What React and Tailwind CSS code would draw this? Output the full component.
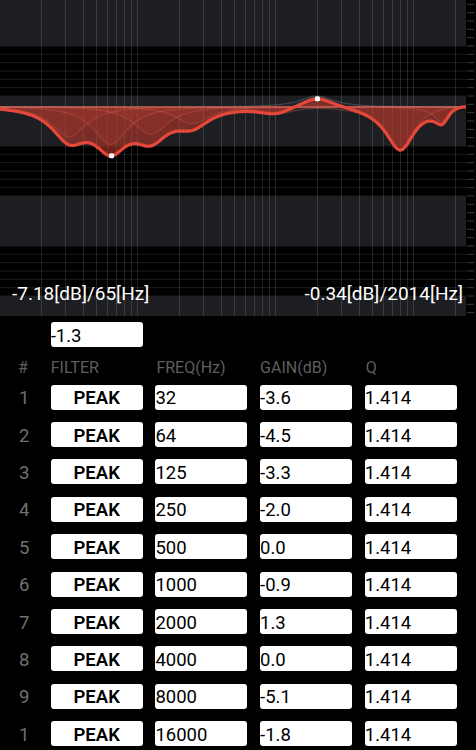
import React, { useMemo } from "react";

const FS = 48000;
const PX_PER_DB = 50 / 6;
const ZERO_Y = 96;
const PREAMP = -1.3;
const GRAPH_W = 466;

const bands = [
  { f: 32, g: -3.6 },
  { f: 64, g: -4.5 },
  { f: 125, g: -3.3 },
  { f: 250, g: -2.0 },
  { f: 500, g: 0.0 },
  { f: 1000, g: -0.9 },
  { f: 2000, g: 1.3 },
  { f: 4000, g: 0.0 },
  { f: 8000, g: -5.1 },
  { f: 16000, g: -1.8 },
];

const gridFreqs = [
  20, 30, 40, 50, 60, 70, 80, 90, 100,
  200, 300, 400, 500, 600, 700, 800, 900, 1000,
  2000, 3000, 4000, 5000, 6000, 7000, 8000, 9000, 10000,
  20000,
];

const xToFreq = (x) => 20 * Math.pow(10, (x - 41) / 138);
const freqToX = (f) => 41 + 138 * Math.log10(f / 20);
const dbToY = (db) => ZERO_Y - db * PX_PER_DB;

// rbj peaking filter magnitude in dB
function peakDb(f0, gain, q, f) {
  const A = Math.pow(10, gain / 40);
  const w0 = (2 * Math.PI * f0) / FS;
  const alpha = Math.sin(w0) / (2 * q);
  const cw = Math.cos(w0);
  const b0 = 1 + alpha * A, b1 = -2 * cw, b2 = 1 - alpha * A;
  const a0 = 1 + alpha / A, a1 = -2 * cw, a2 = 1 - alpha / A;
  const w = (2 * Math.PI * f) / FS;
  const c1 = Math.cos(w), s1 = Math.sin(w), c2 = Math.cos(2 * w), s2 = Math.sin(2 * w);
  const nr = b0 + b1 * c1 + b2 * c2, ni = -(b1 * s1 + b2 * s2);
  const dr = a0 + a1 * c1 + a2 * c2, di = -(a1 * s1 + a2 * s2);
  return 10 * Math.log10((nr * nr + ni * ni) / (dr * dr + di * di));
}

const totalDb = (f) => PREAMP + bands.reduce((s, b) => s + peakDb(b.f, b.g, 1.414, f), 0);

const EqGraph = () => {
  const { curve, fill, singles } = useMemo(() => {
    const xs = [];
    for (let x = 0; x <= GRAPH_W; x += 1) xs.push(x);
    const pts = xs.map((x) => [x, dbToY(totalDb(xToFreq(x)))]);
    const base = dbToY(PREAMP);
    const line = pts.map(([x, y], i) => `${i ? "L" : "M"}${x},${y.toFixed(2)}`).join(" ");
    const area = `${line} L${GRAPH_W},${base} L0,${base} Z`;
    const one = bands
      .filter((b) => b.g !== 0)
      .map((b) => {
        const p = xs.map((x) => [x, base - peakDb(b.f, b.g, 1.414, xToFreq(x)) * PX_PER_DB]);
        const d = p.map(([x, y], i) => `${i ? "L" : "M"}${x},${y.toFixed(2)}`).join(" ");
        return { d, area: `${d} L${GRAPH_W},${base} L0,${base} Z`, up: b.g > 0 };
      });
    return { curve: line, fill: area, singles: one };
  }, []);

  const markers = [65, 2014].map((f) => [freqToX(f), dbToY(totalDb(f))]);
  const minor = [];
  for (let i = 0; i <= 38; i++) minor.push(i * PX_PER_DB - 4);

  return (
    <svg width="476" height="316" viewBox="0 0 476 316" className="absolute inset-0">
      <rect x="0" y="0" width="476" height="316" fill="#000" />
      {minor.map((y, i) => (
        <line key={i} x1="0" x2={GRAPH_W} y1={y} y2={y} stroke="#1b1b1d" strokeWidth="1" />
      ))}
      {[0, 96, 196, 296].map((y, i) => (
        <rect key={i} x="0" y={y} width={GRAPH_W} height={i === 0 ? 46 : 50} fill="#1c1e22" />
      ))}
      {minor.map((y, i) => (
        <line key={i} x1="467" x2="474" y1={y} y2={y} stroke="#3a3b3e" strokeWidth="1" />
      ))}
      {gridFreqs.map((f) => {
        const x = Math.round(freqToX(f)) + 0.5;
        return <line key={f} x1={x} x2={x} y1="0" y2="316" stroke="#ffffff" strokeOpacity="0.13" strokeWidth="1" />;
      })}
      {singles.map((s, i) => (
        <path key={`a${i}`} d={s.area} fill={s.up ? "#888" : "#d8503f"} fillOpacity={s.up ? 0.05 : 0.12} />
      ))}
      <path d={fill} fill="#c0392b" fillOpacity="0.58" />
      {singles.map((s, i) => (
        <path key={`s${i}`} d={s.d} fill="none" stroke={s.up ? "#9a9a9a" : "#f07060"} strokeOpacity={s.up ? 0.3 : 0.25} strokeWidth="1.2" />
      ))}
      <path d={curve} fill="none" stroke="#e5483a" strokeWidth="3.2" strokeLinejoin="round" />
      {markers.map(([x, y], i) => (
        <rect key={i} x={x - 2.5} y={y - 2.5} width="5" height="5" rx="1.5" fill="#fff" />
      ))}
    </svg>
  );
};

const rows = bands.map((b, i) => ({
  n: i < 9 ? String(i + 1) : "1",
  freq: String(b.f),
  gain: b.g.toFixed(1),
  q: "1.414",
}));

const Box = ({ children, center }) => (
  <div
    className={`w-[92px] h-[25px] shrink-0 rounded-[3px] bg-white text-black text-[18.5px] leading-none pt-[4.6px] whitespace-nowrap overflow-hidden ${
      center ? "text-center font-semibold" : "text-left"
    }`}
  >
    {children}
  </div>
);

export default function App() {
  return (
    <div className="w-[476px] h-[750px] overflow-hidden bg-black font-['Roboto',sans-serif]">
      <div className="relative w-[476px] h-[316px] flex flex-col justify-end">
        <EqGraph />
        <div className="relative flex justify-between pl-3 pr-[13px] pb-[13px] text-white text-[19px] leading-none">
          <span>-7.18[dB]/65[Hz]</span>
          <span>-0.34[dB]/2014[Hz]</span>
        </div>
      </div>

      <div className="pl-[50.7px] mt-[6px]">
        <Box>-1.3</Box>
      </div>

      <div className="flex items-start mt-[12.5px] h-[16px] text-[16px] leading-none text-[#5e5e5e]">
        <div className="w-[50.7px] pl-[18px]">#</div>
        <div className="flex gap-[12.7px]">
          <div className="w-[92px]">FILTER</div>
          <div className="w-[92px] pl-px">FREQ(Hz)</div>
          <div className="w-[92px]">GAIN(dB)</div>
          <div className="w-[92px] pl-px">Q</div>
        </div>
      </div>

      <div className="flex flex-col gap-[12.4px] mt-[9.2px]">
        {rows.map((r, i) => (
          <div key={i} className="flex items-start">
            <div className="w-[50.7px] pl-[19px] h-[25px] pt-[4.6px] text-[18.5px] leading-none text-[#707070]">{r.n}</div>
            <div className="flex gap-[12.7px]">
              <Box center>PEAK</Box>
              <Box>{r.freq}</Box>
              <Box>{r.gain}</Box>
              <Box>{r.q}</Box>
            </div>
          </div>
        ))}
      </div>
    </div>
  );
}
